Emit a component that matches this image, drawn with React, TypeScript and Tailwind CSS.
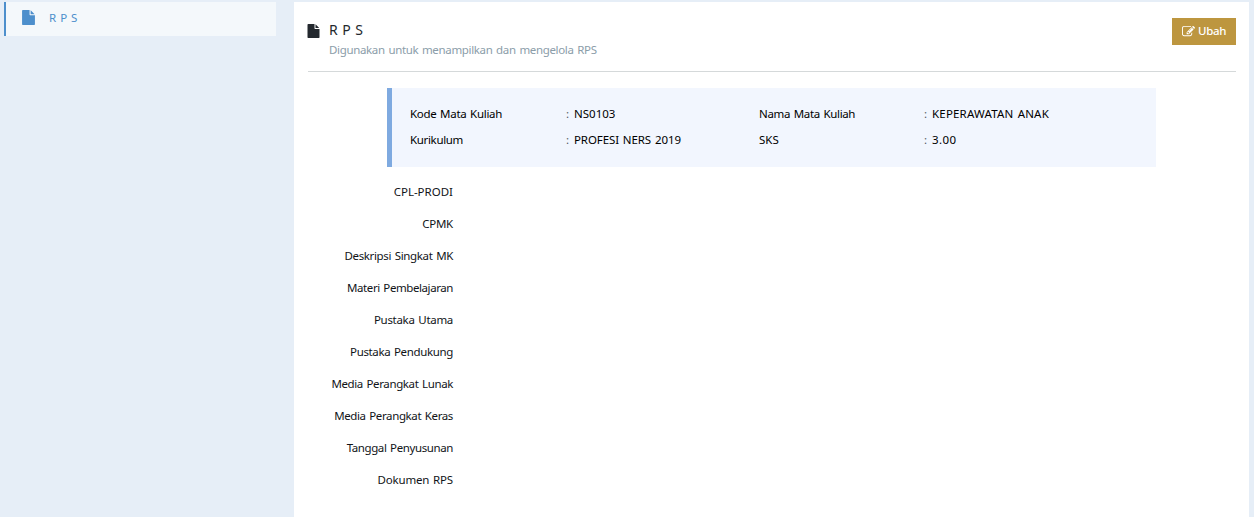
const FILE_PATH =
  'M1152 512v-472q22 14 36 28l408 408q14 14 28 36h-472zm-128 32q0 40 28 68t68 28h544v1056q0 40-28 68t-68 28h-1344q-40 0-68-28t-28-68v-1600q0-40 28-68t68-28h800v544z';
const EDIT_PATH =
  'M888 1184l116-116-152-152-116 116v56h96v96h56zm440-720q-16-16-33 1l-350 350q-17 17-1 33t33-1l350-350q17-17 1-33zm80 594v190q0 119-84.5 203.5t-203.5 84.5h-832q-119 0-203.5-84.5t-84.5-203.5v-832q0-119 84.5-203.5t203.5-84.5h832q63 0 117 25 15 7 18 23 3 17-9 29l-49 49q-14 14-32 8-23-6-45-6h-832q-66 0-113 47t-47 113v832q0 66 47 113t113 47h832q66 0 113-47t47-113v-126q0-13 9-22l64-64q15-15 35-7t20 29zm-96-738l288 288-672 672h-288v-288zm444 132l-92 92-288-288 92-92q28-28 68-28t68 28l152 152q28 28 28 68t-28 68z';

function FileIcon({ className }: { className: string }) {
  return (
    <svg viewBox="128 0 1536 1792" className={className} fill="currentColor" aria-hidden="true">
      <path d={FILE_PATH} />
    </svg>
  );
}

const fields = [
  { label: 'CPL-PRODI', tracking: 'tracking-normal' },
  { label: 'CPMK', tracking: 'tracking-[-0.25px]' },
  { label: 'Deskripsi Singkat MK', tracking: 'tracking-[-0.35px]' },
  { label: 'Materi Pembelajaran', tracking: 'tracking-[-0.42px]' },
  { label: 'Pustaka Utama', tracking: 'tracking-[-0.3px]' },
  { label: 'Pustaka Pendukung', tracking: 'tracking-[-0.35px]' },
  { label: 'Media Perangkat Lunak', tracking: 'tracking-[-0.38px]' },
  { label: 'Media Perangkat Keras', tracking: 'tracking-[-0.38px]' },
  { label: 'Tanggal Penyusunan', tracking: 'tracking-[-0.39px]' },
  { label: 'Dokumen RPS', tracking: 'tracking-[-0.18px]' },
];

const course = [
  { label: 'Kode Mata Kuliah', value: 'NS0103', lt: 'tracking-[-0.3px]', vt: 'tracking-normal' },
  { label: 'Nama Mata Kuliah', value: 'KEPERAWATAN ANAK', lt: 'tracking-[-0.34px]', vt: 'tracking-[0.19px]' },
  { label: 'Kurikulum', value: 'PROFESI NERS 2019', lt: 'tracking-[-0.33px]', vt: 'tracking-[-0.1px]' },
  { label: 'SKS', value: '3.00', lt: 'tracking-normal', vt: 'tracking-[0.4px]' },
];

export default function App() {
  return (
    <div className="flex h-[517px] w-full overflow-hidden bg-[#e6eef7] pt-0.5 pr-[5px] pl-1 font-['Noto_Sans',sans-serif] text-[11.5px] text-[#111418] [word-spacing:1px]">
      <aside className="w-[272px] shrink-0">
        <a className="flex h-[34px] items-center border-l-2 border-[#4d8fcc] bg-[#f4f8fb] pl-4 text-[#4d8fcc]">
          <FileIcon className="mb-1 h-[15px] w-[13px]" />
          <span className="mb-0.5 ml-[14px] text-[11.5px] leading-4 tracking-[4px]">RPS</span>
        </a>
      </aside>
      <main className="ml-[18px] flex-1 bg-white pr-[13px] pl-[14px]">
        <header className="flex h-[70px] justify-between border-b border-[#d5d9da]">
          <div className="flex pt-[18px]">
            <FileIcon className="mt-1 -ml-px h-[14px] w-[13px] text-[#23282e]" />
            <div className="ml-[9px]">
              <h1 className="h-5 text-[14px] leading-5 tracking-[4.5px] text-[#23282e]">RPS</h1>
              <p className="h-5 text-[11.5px] leading-5 tracking-[-0.34px] whitespace-nowrap text-[#8b9da9]">
                Digunakan untuk menampilkan dan mengelola RPS
              </p>
            </div>
          </div>
          <button className="mt-4 flex h-[27px] w-16 items-center bg-[#bd963f] pl-[10px] text-white">
            <svg viewBox="0 0 1792 1792" className="mb-px size-[13px]" fill="currentColor" aria-hidden="true">
              <path d={EDIT_PATH} />
            </svg>
            <span className="mb-0.5 ml-[3px] font-medium tracking-[-0.35px]">Ubah</span>
          </button>
        </header>
        <section className="mt-4 ml-[79px] grid h-[79px] w-[769px] grid-cols-[156px_193px_165px_1fr] grid-rows-[26px_26px] border-l-[5px] border-[#7faae0] bg-[#f2f6fe] pt-[13px] pl-[18px] leading-[26px] text-black">
          {course.map((c) => (
            <div key={c.label} className="contents">
              <span className={c.lt}>{c.label}</span>
              <span className="flex whitespace-nowrap">
                <span className="w-2 text-[#555b63]">:</span>
                <span className={c.vt}>{c.value}</span>
              </span>
            </div>
          ))}
        </section>
        <div className="mt-[9px] flex w-[145px] flex-col">
          {fields.map((f) => (
            <div key={f.label} className="flex h-8 justify-end leading-8 whitespace-nowrap">
              <span className={f.tracking}>{f.label}</span>
            </div>
          ))}
        </div>
      </main>
    </div>
  );
}
